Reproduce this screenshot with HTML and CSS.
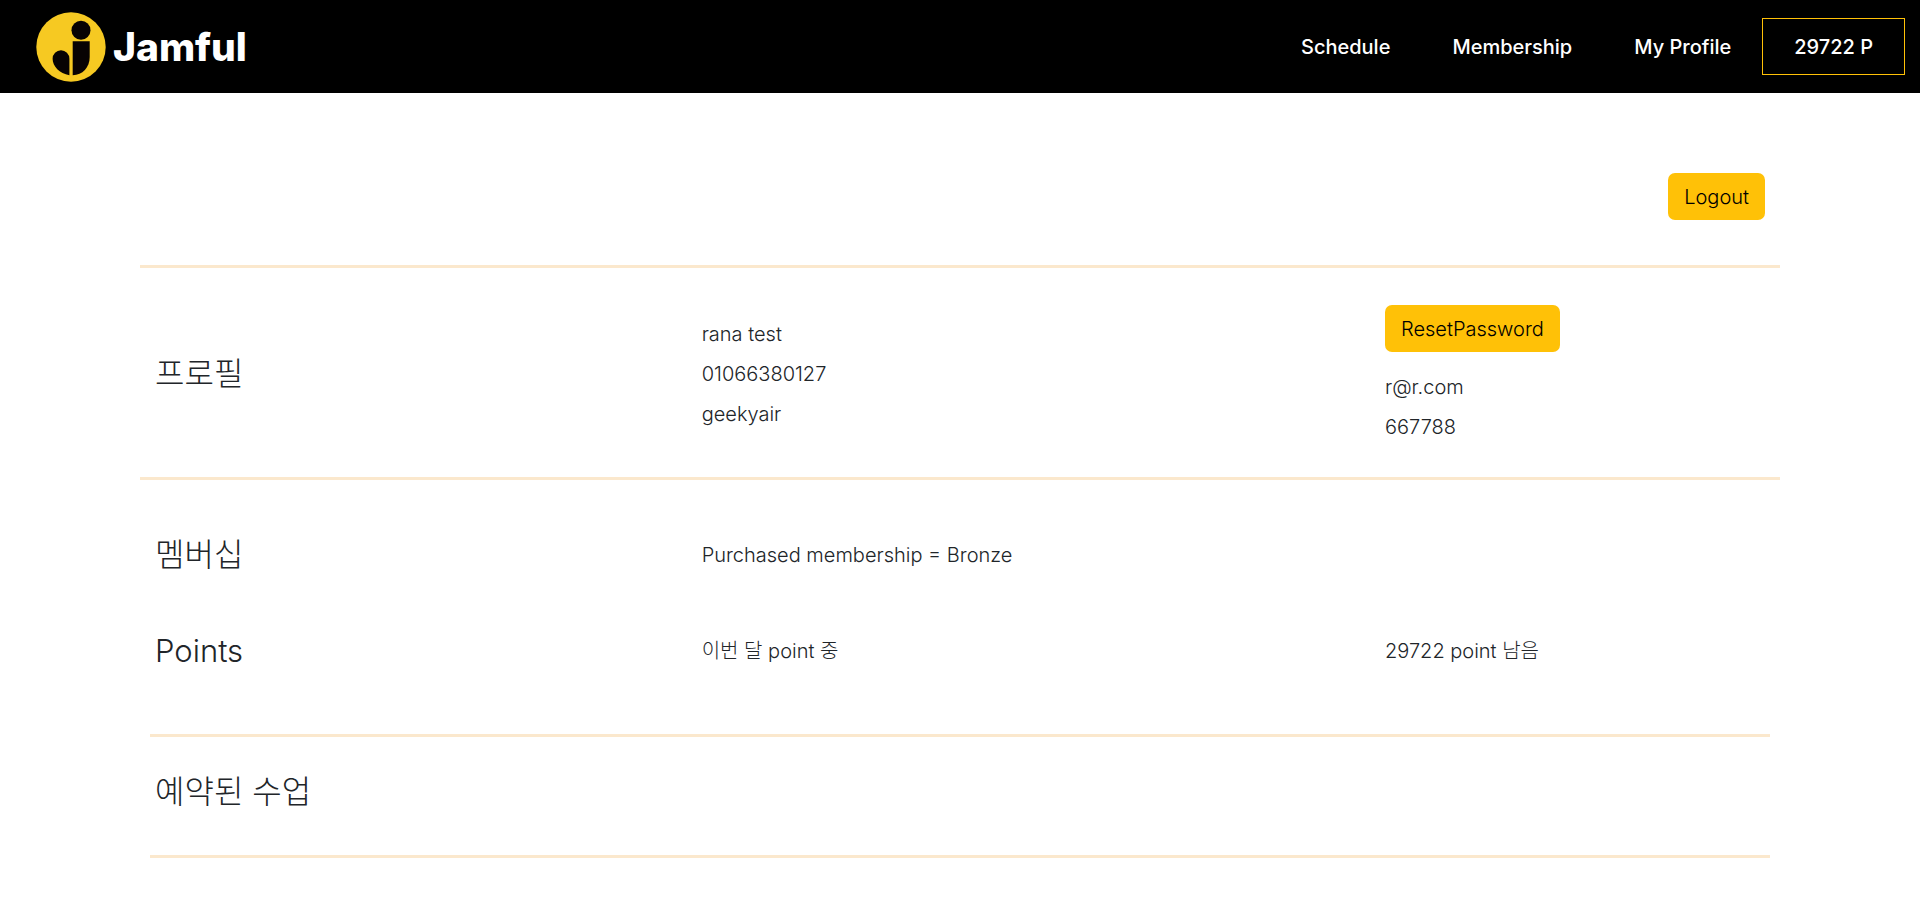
FILE: index.html
```html
<!DOCTYPE html>
<html lang="ko">
<head>
<meta charset="utf-8">
<meta name="viewport" content="width=device-width, initial-scale=1">
<title>Jamful</title>
<link rel="stylesheet" href="styles.css">
</head>
<body>
<header class="navbar">
  <a class="brand" href="#">
    <svg class="brand-mark" viewBox="0 0 70 70" aria-hidden="true">
      <circle cx="35" cy="35" r="34.7" fill="#f6c922"/>
      <g fill="#080303">
        <circle cx="45" cy="18.3" r="9.5"/>
        <path d="M36.7 29.3H53.7V45C53.7 55.5 46.5 63.2 36.7 63.2Z"/>
        <path d="M33.4 63.2C23.5 61.8 16.6 54.2 16.6 46.8A8.4 8.6 0 0 1 25 38.2A8.4 8.6 0 0 1 33.4 46.8Z"/>
      </g>
    </svg>
    <span>Jamful</span>
  </a>
  <nav class="nav">
    <a class="nav-link" href="#">Schedule</a>
    <a class="nav-link" href="#">Membership</a>
    <a class="nav-link" href="#">My Profile</a>
    <a class="nav-link nav-points" href="#">29722 P</a>
  </nav>
</header>
<main class="page">
  <div class="toolbar"><button class="btn" type="button">Logout</button></div>
  <section class="row profile">
    <h2 class="title title-ko">프로필</h2>
    <div>
      <p class="line">rana test</p>
      <p class="line">01066380127</p>
      <p class="line">geekyair</p>
    </div>
    <div>
      <button class="btn reset" type="button">ResetPassword</button>
      <p class="line">r@r.com</p>
      <p class="line">667788</p>
    </div>
  </section>
  <section class="row membership">
    <h2 class="title title-ko">멤버십</h2>
    <p class="line">Purchased membership = Bronze</p>
  </section>
  <section class="row points">
    <h2 class="title">Points</h2>
    <p class="line">이번 달 point 중</p>
    <p class="line">29722 point 남음</p>
  </section>
  <section class="classes">
    <h2 class="title title-ko">예약된 수업</h2>
  </section>
</main>
</body>
</html>
```
FILE: styles.css
```css
* { box-sizing: border-box; }

body {
  margin: 0;
  background: #fff;
  color: #212529;
  font-family: Inter, "Noto Sans CJK KR", sans-serif;
  font-size: 20px;
  font-weight: 300;
  line-height: 30px;
}

.navbar {
  display: flex;
  justify-content: space-between;
  min-height: 93px;
  padding: 0 15px 0 36px;
  background: #000;
}

.brand {
  display: flex;
  align-items: center;
  gap: 7px;
  color: #fff;
  font-size: 39px;
  font-weight: 800;
  text-decoration: none;
}

.brand-mark { width: 70px; height: 70px; }

.nav { display: flex; padding: 18px 0; }

.nav-link {
  display: flex;
  align-items: center;
  padding: 0 31px;
  color: #fff;
  font-weight: 500;
  text-decoration: none;
}

.nav-points { border: 1px solid #ffc107; }

.page { padding: 80px 140px 0; }

.toolbar {
  display: flex;
  justify-content: flex-end;
  padding: 0 15px 45px;
}

.btn {
  min-height: 47px;
  padding: 0 16px;
  border: 0;
  border-radius: 7px;
  background: #ffc107;
  color: #000;
  font: inherit;
}

.row {
  display: grid;
  grid-template-columns: 4fr 5fr 3fr;
  align-items: center;
}

.row > * { padding: 0 15px; }

.profile {
  padding: 37px 0 35px;
  border: solid #fbe8cd;
  border-width: 3px 0;
}

.profile .line + .line { margin-top: 10px; }

.reset { margin-bottom: 20px; }

.title {
  margin: 0;
  font-size: 31px;
  font-weight: 300;
  line-height: 40px;
}

.title-ko { font-size: 32px; }

.line { margin: 0; }

.membership { padding: 55px 0 56px; }

.points { padding-bottom: 63px; }

.classes {
  margin: 0 10px;
  padding: 35px 5px 43px;
  border: solid #fbe8cd;
  border-width: 3px 0;
}
```
